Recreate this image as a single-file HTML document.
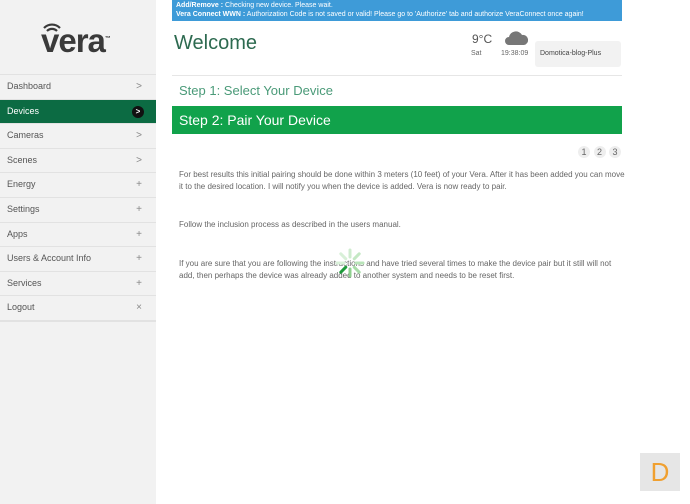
<!DOCTYPE html>
<html><head><style>
*{margin:0;padding:0;box-sizing:border-box}
body{width:690px;height:504px;background:#fff;font-family:"Liberation Sans",sans-serif;position:relative;overflow:hidden;color:#555}
#side{position:absolute;left:0;top:0;width:156px;height:504px;background:#f2f2f2}
.logo{position:absolute;left:41px;top:22px;font-size:33px;color:#3a3a3a;letter-spacing:-1px;font-weight:bold}
.menu{position:absolute;top:74px;left:0;width:156px}
.item{height:24.6px;border-top:1px solid #e2e2e2;font-size:9px;color:#555;padding-left:7px;line-height:23px;position:relative}
.item span{position:absolute;right:14px;top:0;color:#888;font-size:10px}
.item.act{background:#0c6b43;color:#fff}
.item.act span{right:12px;top:6px;width:12px;height:12px;border-radius:6px;background:#111;color:#fff;font-size:8px;line-height:12px;text-align:center;font-weight:bold}
#blue{position:absolute;left:172px;top:0;width:450px;height:21px;background:#3e9bd8;color:#fff;font-size:7px;line-height:9px;padding:1px 4px}
h1{position:absolute;left:174px;top:32px;font-size:20px;font-weight:normal;color:#2d6a50}
.temp{position:absolute;left:472px;top:32px;font-size:12px;color:#555}
.sat{position:absolute;left:471px;top:50px;font-size:7px;color:#666}
.time{position:absolute;left:501px;top:50px;font-size:7px;color:#666}
.dev{position:absolute;left:535px;top:41px;width:86px;height:26px;background:#f2f2f2;border-radius:3px;font-size:7px;line-height:26px;padding-left:5px;color:#444}
.hl{position:absolute;left:172px;top:75px;width:450px;height:1px;background:#e6e6e6}
.s1{position:absolute;left:179px;top:83px;font-size:13px;color:#4a9a78}
.s2{position:absolute;left:172px;top:106px;width:450px;height:28px;background:#11a24b;color:#fff;font-size:14px;line-height:28px;padding-left:7px}
.nums{position:absolute;left:577px;top:146px;font-size:9px;color:#666}
.nums b{display:inline-block;width:12px;height:12px;border-radius:6px;background:#eee;text-align:center;line-height:12px;font-weight:normal;margin-left:1px}
p{position:absolute;left:179px;width:446px;font-size:8px;line-height:12px;color:#666}
.D{position:absolute;left:640px;top:453px;width:40px;height:38px;background:#e6e6e6;color:#f0a030;font-size:26px;text-align:center;line-height:38px}
</style></head><body>
<div id="side">
<div class="logo">vera<sup style="font-size:6px">™</sup></div>
<svg style="position:absolute;left:42px;top:22px" width="20" height="12" viewBox="0 0 20 12"><path d="M2 6 A11 11 0 0 1 18 6 M5 9 A7 7 0 0 1 15 9" stroke="#3a3a3a" stroke-width="2.2" fill="none"/></svg>
<div class="menu">
<div class="item">Dashboard<span>&gt;</span></div>
<div class="item act">Devices<span>&gt;</span></div>
<div class="item">Cameras<span>&gt;</span></div>
<div class="item">Scenes<span>&gt;</span></div>
<div class="item">Energy<span>+</span></div>
<div class="item">Settings<span>+</span></div>
<div class="item">Apps<span>+</span></div>
<div class="item">Users &amp; Account Info<span>+</span></div>
<div class="item">Services<span>+</span></div>
<div class="item">Logout<span>×</span></div>
<div class="item" style="border-bottom:1px solid #e2e2e2;height:1px"></div>
</div>
</div>
<div id="blue"><b>Add/Remove :</b> Checking new device. Please wait.<br><b>Vera Connect WWN :</b> Authorization Code is not saved or valid! Please go to 'Authorize' tab and authorize VeraConnect once again!</div>
<h1>Welcome</h1>
<div class="temp">9°C</div>
<svg style="position:absolute;left:505px;top:30px" width="23" height="15" viewBox="0 0 23 15"><path d="M4 15 A4 4 0 0 1 4 7 A7 7 0 0 1 17 5 A5 5 0 0 1 19 15 Z" fill="#777"/></svg>
<div class="sat">Sat</div><div class="time">19:38:09</div>
<div class="dev">Domotica-blog-Plus</div>
<div class="hl"></div>
<div class="s1">Step 1: Select Your Device</div>
<div class="s2">Step 2: Pair Your Device</div>
<div class="nums"><b>1</b> <b>2</b> <b>3</b></div>
<p style="top:169px">For best results this initial pairing should be done within 3 meters (10 feet) of your Vera. After it has been added you can move it to the desired location. I will notify you when the device is added. Vera is now ready to pair.</p>
<p style="top:219px">Follow the inclusion process as described in the users manual.</p>
<p style="top:258px">If you are sure that you are following the instructions and have tried several times to make the device pair but it still will not add, then perhaps the device was already added to another system and needs to be reset first.</p>
<svg style="position:absolute;left:333px;top:246px" width="34" height="34" viewBox="-17 -17 34 34">
<g stroke-width="3" stroke-linecap="round">
<line x1="0" y1="-6" x2="0" y2="-13" stroke="#cfeccf" transform="rotate(0)"/>
<line x1="0" y1="-6" x2="0" y2="-13" stroke="#c4e8c4" transform="rotate(45)"/>
<line x1="0" y1="-6" x2="0" y2="-13" stroke="#b8e4b8" transform="rotate(90)"/>
<line x1="0" y1="-6" x2="0" y2="-13" stroke="#a8dca8" transform="rotate(135)"/>
<line x1="0" y1="-6" x2="0" y2="-13" stroke="#8fd08f" transform="rotate(180)"/>
<line x1="0" y1="-6" x2="0" y2="-13" stroke="#1d9a3a" transform="rotate(225)"/>
<line x1="0" y1="-6" x2="0" y2="-13" stroke="#d8f0d8" transform="rotate(270)"/>
<line x1="0" y1="-6" x2="0" y2="-13" stroke="#d8f0d8" transform="rotate(315)"/>
</g></svg>
<div class="D">D</div>
</body></html>
